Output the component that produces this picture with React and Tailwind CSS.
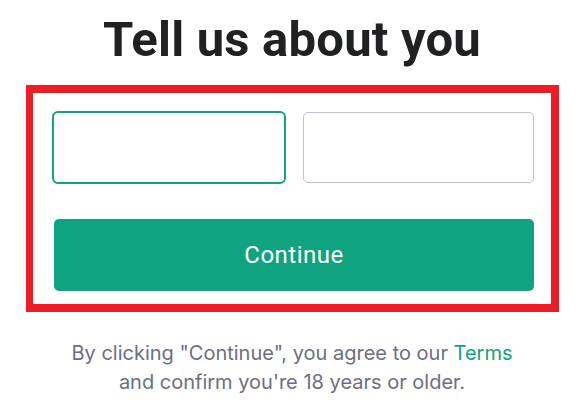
export default function App() {
  return (
    <div className="min-h-screen bg-white flex flex-col items-center pt-[12px]">
      <h1
        className="text-[49px] leading-[56px] font-bold text-[#202123] tracking-[0.2px]"
        style={{ fontFamily: 'Roboto, "Liberation Sans", sans-serif' }}
      >
        Tell us about you
      </h1>

      <div className="mt-[17px] ml-[1px] w-[533px] border-[8px] border-l-[7px] border-[#ee1c25] pl-[21px] pr-[17px] pt-[18px] pb-[13px]">
        <div className="flex items-center justify-between">
          <input
            type="text"
            className="-ml-[2px] w-[234px] h-[73px] rounded-[6px] border-2 border-[#10a37f] outline-none"
          />
          <input
            type="text"
            className="w-[231px] h-[71px] rounded-[5px] border border-[#c2c2cc] outline-none"
          />
        </div>
        <button
          className="mt-[35px] w-full h-[72px] rounded-[5px] bg-[#10a37f] text-white text-[24px] tracking-[0.5px]"
          style={{ fontFamily: 'Roboto, "Liberation Sans", sans-serif' }}
        >
          Continue
        </button>
      </div>

      <p
        className="mt-[27px] text-center text-[20px] leading-[29px] text-[#6e6e80]"
        style={{ fontFamily: 'Inter, "Noto Sans", sans-serif' }}
      >
        By clicking "Continue", you agree to our <span className="text-[#10a37f]">Terms</span>
        <br />
        and confirm you're 18 years or older.
      </p>
    </div>
  );
}
